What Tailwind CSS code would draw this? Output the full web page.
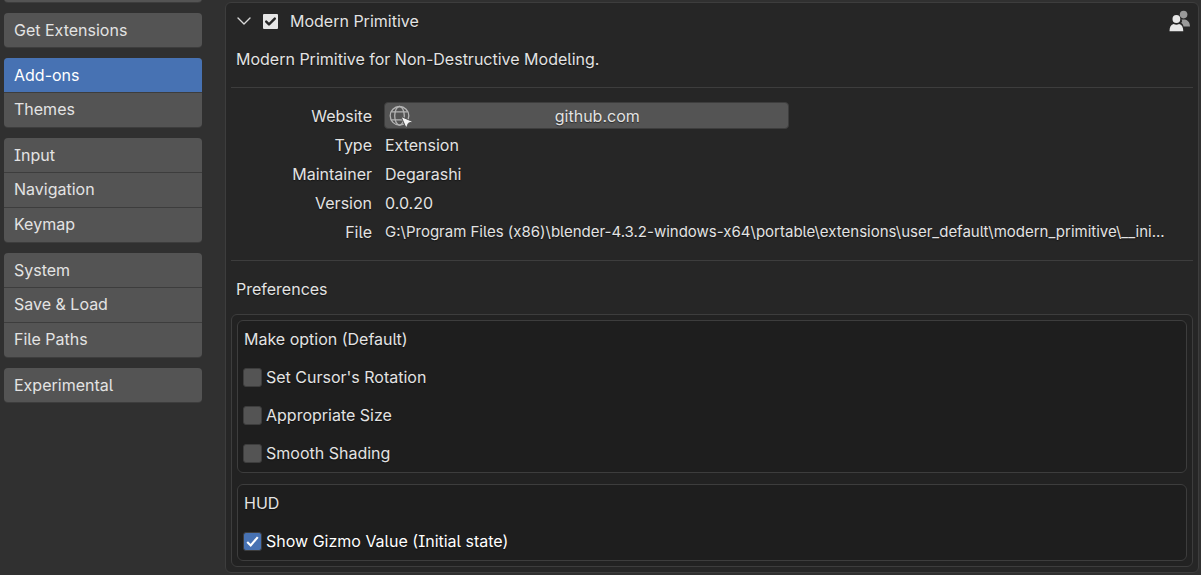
<!DOCTYPE html>
<html lang="en">
<head>
<meta charset="utf-8">
<title>Preferences</title>
<script src="https://cdn.jsdelivr.net/npm/@tailwindcss/browser@4"></script>
</head>
<body class="flex min-h-screen overflow-hidden bg-[#303030] font-[Inter,sans-serif] text-base leading-5 text-[#e3e3e3] [font-feature-settings:'cv05','cv08'] text-shadow-[0_1px_1px_rgb(0_0_0/0.5)]">
  <nav class="-mt-8 flex w-[225px] shrink-0 flex-col gap-[11px] pr-[23px] pl-1" aria-label="Preference sections">
    <div class="flex flex-col overflow-hidden rounded bg-[#545454] shadow-[0_1px_0_#3d3d3d]">
      <button type="button" class="h-[34px] px-2.5 text-left" aria-label="Interface"></button>
    </div>
    <div class="flex flex-col overflow-hidden rounded bg-[#545454] shadow-[0_1px_0_#3d3d3d]">
      <button type="button" class="h-[34px] px-2.5 text-left">Get Extensions</button>
    </div>
    <div class="flex flex-col divide-y divide-[#3d3d3d] overflow-hidden rounded bg-[#545454] shadow-[0_1px_0_#3d3d3d]">
      <button type="button" class="h-[35px] bg-[#4772b3] px-2.5 text-left text-white">Add-ons</button>
      <button type="button" class="h-[34px] px-2.5 pb-0.5 text-left">Themes</button>
    </div>
    <div class="flex flex-col divide-y divide-[#3d3d3d] overflow-hidden rounded bg-[#545454] shadow-[0_1px_0_#3d3d3d]">
      <button type="button" class="h-[35px] px-2.5 text-left">Input</button>
      <button type="button" class="h-[35px] px-2.5 pb-0.5 text-left">Navigation</button>
      <button type="button" class="h-[34px] px-2.5 pb-0.5 text-left">Keymap</button>
    </div>
    <div class="flex flex-col divide-y divide-[#3d3d3d] overflow-hidden rounded bg-[#545454] shadow-[0_1px_0_#3d3d3d]">
      <button type="button" class="h-[35px] px-2.5 text-left">System</button>
      <button type="button" class="h-[35px] px-2.5 pb-0.5 text-left">Save &amp; Load</button>
      <button type="button" class="h-[34px] px-2.5 pb-0.5 text-left">File Paths</button>
    </div>
    <div class="flex flex-col overflow-hidden rounded bg-[#545454] shadow-[0_1px_0_#3d3d3d]">
      <button type="button" class="h-[34px] px-2.5 text-left">Experimental</button>
    </div>
  </nav>

  <main class="mt-0.5 mr-0.5 mb-0.5 min-w-0 flex-1 self-start rounded-md border border-[#3d3d3d] bg-[#262626] p-[5px] pt-0">
    <header class="flex h-[37px] items-center pr-0.5 pb-px pl-[5px]">
      <button type="button" class="flex size-4 items-center justify-center" aria-label="Collapse">
        <svg class="h-4 w-4" viewBox="0 0 16 16" fill="none" stroke="#d8d8d8" stroke-width="1.4" stroke-linecap="round" stroke-linejoin="round"><path d="M2 5 8 11 14 5"/></svg>
      </button>
      <label class="ml-2.5 flex items-center gap-3">
        <span class="grid size-4 place-items-center">
          <input type="checkbox" checked class="col-start-1 row-start-1 size-[15px] appearance-none rounded-[1px] bg-[#e6e6e6]">
          <svg class="pointer-events-none col-start-1 row-start-1 size-[15px]" viewBox="0 0 15 15" fill="none" stroke="#262626" stroke-width="2.4"  stroke-linecap="round" stroke-linejoin="round"><path d="M3.2 7.6 6 10.4 11.8 4.6"/></svg>
        </span>
        Modern Primitive
      </label>
      <svg class="ml-auto h-[22px] w-[22px]" viewBox="0 0 22 22" role="img" aria-label="Community add-on">
        <g fill="#999"><circle cx="14.6" cy="4.6" r="3.8"/><path d="M12.4 9.6h3.4c3 .6 5.2 2.900 5.200 6.900h-6.500c-.3-1.700-1.100-2.900-2.300-3.800 1-.8 1.300-1.900.2-3.100z"/></g>
        <circle cx="7.400" cy="9" r="4.400" fill="#262626"/>
        <g fill="#e6e6e6"><circle cx="7.400" cy="9" r="3.900"/><path d="M.5 21.200c0-4 1.400-6.500 4.200-7.200 1.600 1.100 3.800 1.100 5.400 0 2.800.7 4.200 3.200 4.200 7.200z"/></g>
      </svg>
    </header>
    <p class="flex h-[38px] items-center px-[5px]">Modern Primitive for Non-Destructive Modeling.</p>

    <hr class="mt-[9px] border-[#3d3d3d]">

    <dl class="mt-[13px] grid grid-cols-[153px_minmax(0,1fr)] auto-rows-[29px] items-center [&_dt]:pr-3 [&_dt]:text-right">
      <dt>Website</dt>
      <dd>
        <a href="https://github.com" class="flex h-[27px] w-1/2 items-center rounded border border-[#3d3d3d] bg-[#545454] px-1">
          <svg class="size-[22px] shrink-0 overflow-visible" viewBox="0 0 22 22" aria-hidden="true">
            <g fill="none" stroke="#b4b4b4" stroke-width="1.3"><circle cx="10.500" cy="10.800" r="9.300"/><ellipse cx="10.500" cy="10.800" rx="4.800" ry="9.300"/><path d="M2.500 6.800h16M2.500 14.800h16"/></g>
            <path d="M12 11.500 24 16.700l-4.600 1.500-2.200 5z" fill="#f4f4f4" stroke="#545454" stroke-width="1"/>
          </svg>
          <span class="flex-1 text-center">github.com</span>
        </a>
      </dd>
      <dt>Type</dt><dd class="pl-px">Extension</dd>
      <dt>Maintainer</dt><dd class="pl-px">Degarashi</dd>
      <dt>Version</dt><dd class="pl-px">0.0.20</dd>
      <dt>File</dt><dd class="truncate pl-px text-[15px]">G:\Program Files (x86)\blender-4.3.2-windows-x64\portable\extensions\user_default\modern_primitive\__ini...</dd>
    </dl>

    <hr class="mt-3.5 border-[#3d3d3d]">

    <h2 class="mt-[9px] flex h-[38px] items-center px-[5px]">Preferences</h2>
    <section class="mt-1.5 flex flex-col gap-[11px] rounded-md border border-[#3d3d3d] bg-[#222222] p-[5px]">
      <fieldset class="rounded-md border border-[#3d3d3d] bg-[#1e1e1e] px-[5px]" aria-labelledby="make">
        <div id="make" class="mb-px flex h-9 items-center pl-px">Make option (Default)</div>
        <label class="flex h-[38px] items-center gap-1"><input type="checkbox" class="size-[19px] appearance-none rounded-[3px] border border-[#3d3d3d] bg-[#545454]">Set Cursor's Rotation</label>
        <label class="flex h-[38px] items-center gap-1"><input type="checkbox" class="size-[19px] appearance-none rounded-[3px] border border-[#3d3d3d] bg-[#545454]">Appropriate Size</label>
        <label class="flex h-[38px] items-center gap-1"><input type="checkbox" class="size-[19px] appearance-none rounded-[3px] border border-[#3d3d3d] bg-[#545454]">Smooth Shading</label>
      </fieldset>
      <fieldset class="rounded-md border border-[#3d3d3d] bg-[#1e1e1e] px-[5px]" aria-labelledby="hud">
        <div id="hud" class="mb-px flex h-9 items-center pl-px">HUD</div>
        <label class="flex h-[38px] items-center gap-1 text-white">
          <span class="grid size-[19px] place-items-center">
            <input type="checkbox" checked class="col-start-1 row-start-1 size-[19px] appearance-none rounded-[3px] border border-[#3d3d3d] bg-[#4772b3]">
            <svg class="pointer-events-none col-start-1 row-start-1 size-[19px]" viewBox="0 0 18 18" fill="none" stroke="#fff" stroke-width="2"><path d="M4 9.500 7.300 12.800 14 4.800"/></svg>
          </span>
          Show Gizmo Value (Initial state)
        </label>
      </fieldset>
    </section>
  </main>
</body>
</html>
